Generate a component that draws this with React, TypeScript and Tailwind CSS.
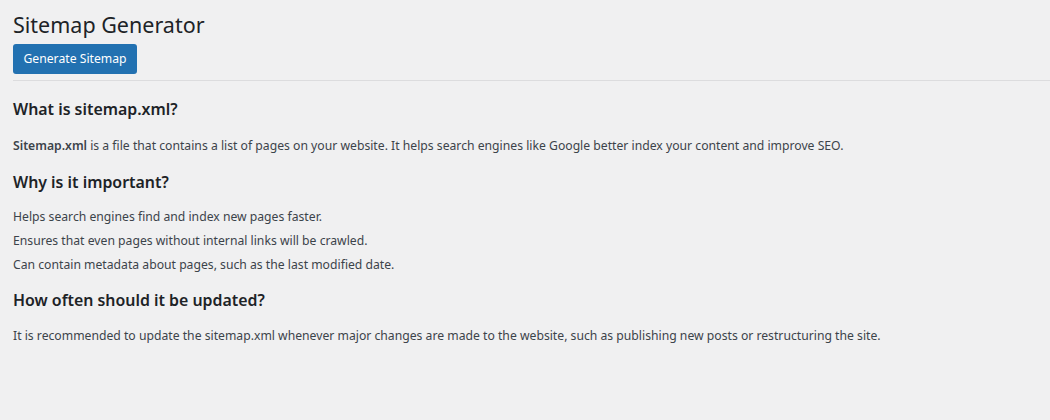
import React from "react";

export default function App() {
  const font = { fontFamily: '"Noto Sans", "Open Sans", sans-serif' };
  return (
    <div className="min-h-[420px] w-full bg-[#f0f0f1] text-[#3c434a]" style={font}>
      <div className="pl-[13px]">
        <h1 className="pt-[10px] pb-[4px] text-[21.5px] leading-[30px] font-normal text-[#1d2327]">
          Sitemap Generator
        </h1>
        <button className="h-[30px] w-[124px] rounded-[3px] bg-[#2271b1] text-[12.2px] leading-[28px] text-white">
          Generate Sitemap
        </button>
        <div className="mt-[6px] h-px bg-[#dcdcde]" />
        <h2 className="mt-[17px] text-[15.9px] leading-[22px] font-semibold text-[#1d2327]">
          What is sitemap.xml?
        </h2>
        <p className="mt-[16px] text-[12.2px] leading-[20px]">
          <strong className="font-semibold">Sitemap.xml</strong> is a file that contains a list of pages on your website. It helps search engines like Google better index your content and improve SEO.
        </p>
        <h2 className="mt-[15px] text-[15.9px] leading-[22px] font-semibold text-[#1d2327]">
          Why is it important?
        </h2>
        <ul className="mt-[15px] text-[12.2px] leading-[18px]">
          <li className="mb-[6px]">Helps search engines find and index new pages faster.</li>
          <li className="mb-[6px]">Ensures that even pages without internal links will be crawled.</li>
          <li className="mb-[6px]">Can contain metadata about pages, such as the last modified date.</li>
        </ul>
        <h2 className="mt-[15px] text-[15.9px] leading-[22px] font-semibold text-[#1d2327]">
          How often should it be updated?
        </h2>
        <p className="mt-[15px] text-[12.2px] leading-[20px]">
          It is recommended to update the sitemap.xml whenever major changes are made to the website, such as publishing new posts or restructuring the site.
        </p>
      </div>
    </div>
  );
}
